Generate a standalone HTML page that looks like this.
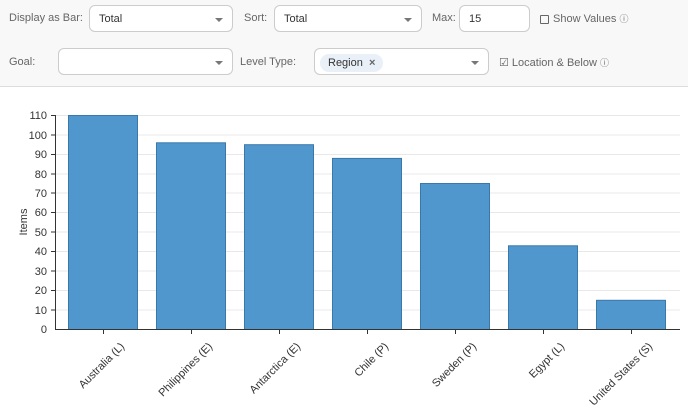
<!DOCTYPE html>
<html><head><style>
body{margin:0;width:688px;height:412px;overflow:hidden;background:#fff;font-family:"Liberation Sans",sans-serif;}
.hdr{position:absolute;left:0;top:0;width:688px;height:86px;background:#f8f8f8;border-bottom:1px solid #ddd;}
.lbl{position:absolute;font-size:11px;color:#666;}
.box{position:absolute;background:#fff;border:1px solid #ccc;border-radius:6px;box-sizing:border-box;font-size:11px;color:#333;}
.box span.t{position:absolute;left:9px;top:7px;}
.arr{position:absolute;right:9px;top:12px;width:0;height:0;border-left:4px solid transparent;border-right:4px solid transparent;border-top:4px solid #777;}
.chip{position:absolute;left:5px;top:5px;height:18px;background:#e9f0f8;border-radius:9px;padding:0 8px;font-size:11px;line-height:18px;color:#333;}
.cb{position:absolute;width:7px;height:7px;border:1px solid #666;border-radius:1px;}
</style></head><body>
<div class="hdr">
<div class="lbl" style="left:9px;top:12px">Display as Bar:</div>
<div class="box" style="left:89px;top:5px;width:144px;height:27px"><span class="t">Total</span><div class="arr"></div></div>
<div class="lbl" style="left:244px;top:12px">Sort:</div>
<div class="box" style="left:274px;top:5px;width:148px;height:27px"><span class="t">Total</span><div class="arr"></div></div>
<div class="lbl" style="left:432px;top:12px">Max:</div>
<div class="box" style="left:459px;top:5px;width:71px;height:27px"><span class="t">15</span></div>
<div class="cb" style="left:540px;top:15px"></div>
<div class="lbl" style="left:553px;top:12px">Show Values <span style="font-size:9px">ⓘ</span></div>
<div class="lbl" style="left:9px;top:56px">Goal:</div>
<div class="box" style="left:58px;top:48px;width:175px;height:27px"><div class="arr"></div></div>
<div class="lbl" style="left:240px;top:56px">Level Type:</div>
<div class="box" style="left:314px;top:48px;width:175px;height:27px"><div class="chip">Region &nbsp;<b style="color:#666">×</b></div><div class="arr"></div></div>
<div class="lbl" style="left:499px;top:56px">☑ Location &amp; Below <span style="font-size:9px">ⓘ</span></div>
</div>
<svg width="688" height="412" style="position:absolute;left:0;top:0" font-family="Liberation Sans, sans-serif" font-size="11" fill="#333">
<g stroke="#e8e8e8" stroke-width="1">
<line x1="55" x2="680" y1="115.5" y2="115.5"/><line x1="55" x2="680" y1="135" y2="135"/><line x1="55" x2="680" y1="154.5" y2="154.5"/><line x1="55" x2="680" y1="174" y2="174"/><line x1="55" x2="680" y1="193" y2="193"/><line x1="55" x2="680" y1="212.5" y2="212.5"/><line x1="55" x2="680" y1="232" y2="232"/><line x1="55" x2="680" y1="251.5" y2="251.5"/><line x1="55" x2="680" y1="271" y2="271"/><line x1="55" x2="680" y1="290.5" y2="290.5"/><line x1="55" x2="680" y1="310" y2="310"/>
</g>
<g fill="#5097cd" stroke="#3a78ab" stroke-width="1">
<rect x="68.5" y="115.5" width="69" height="214"/>
<rect x="156.5" y="142.8" width="69" height="186.7"/>
<rect x="244.5" y="144.7" width="69" height="184.8"/>
<rect x="332.5" y="158.4" width="69" height="171.1"/>
<rect x="420.5" y="183.5" width="69" height="146"/>
<rect x="508.5" y="245.8" width="69" height="83.7"/>
<rect x="596.5" y="300.3" width="69" height="29.2"/>
</g>
<g stroke="#333" stroke-width="1">
<line x1="55.5" y1="115" x2="55.5" y2="330"/><line x1="55" y1="329.5" x2="680" y2="329.5"/>
<line x1="103.5" y1="330" x2="103.5" y2="334"/><line x1="191.5" y1="330" x2="191.5" y2="334"/><line x1="279.5" y1="330" x2="279.5" y2="334"/><line x1="367.5" y1="330" x2="367.5" y2="334"/><line x1="455.5" y1="330" x2="455.5" y2="334"/><line x1="543.5" y1="330" x2="543.5" y2="334"/><line x1="631.5" y1="330" x2="631.5" y2="334"/>
<line x1="51" x2="55" y1="115.5" y2="115.5"/><line x1="51" x2="55" y1="135" y2="135"/><line x1="51" x2="55" y1="154.5" y2="154.5"/><line x1="51" x2="55" y1="174" y2="174"/><line x1="51" x2="55" y1="193" y2="193"/><line x1="51" x2="55" y1="212.5" y2="212.5"/><line x1="51" x2="55" y1="232" y2="232"/><line x1="51" x2="55" y1="251.5" y2="251.5"/><line x1="51" x2="55" y1="271" y2="271"/><line x1="51" x2="55" y1="290.5" y2="290.5"/><line x1="51" x2="55" y1="310" y2="310"/>
</g>
<g text-anchor="end">
<text x="47" y="119">110</text><text x="47" y="139">100</text><text x="47" y="158">90</text><text x="47" y="178">80</text><text x="47" y="197">70</text><text x="47" y="216">60</text><text x="47" y="236">50</text><text x="47" y="255">40</text><text x="47" y="275">30</text><text x="47" y="294">20</text><text x="47" y="314">10</text><text x="47" y="333">0</text>
</g>
<text transform="translate(27,222) rotate(-90)" text-anchor="middle">Items</text>
<g text-anchor="end">
<text transform="translate(125,347) rotate(-45)">Australia (L)</text>
<text transform="translate(213,347) rotate(-45)">Philippines (E)</text>
<text transform="translate(301,347) rotate(-45)">Antarctica (E)</text>
<text transform="translate(389,347) rotate(-45)">Chile (P)</text>
<text transform="translate(477,347) rotate(-45)">Sweden (P)</text>
<text transform="translate(565,347) rotate(-45)">Egypt (L)</text>
<text transform="translate(653,347) rotate(-45)">United States (S)</text>
</g>
</svg>
</body></html>
